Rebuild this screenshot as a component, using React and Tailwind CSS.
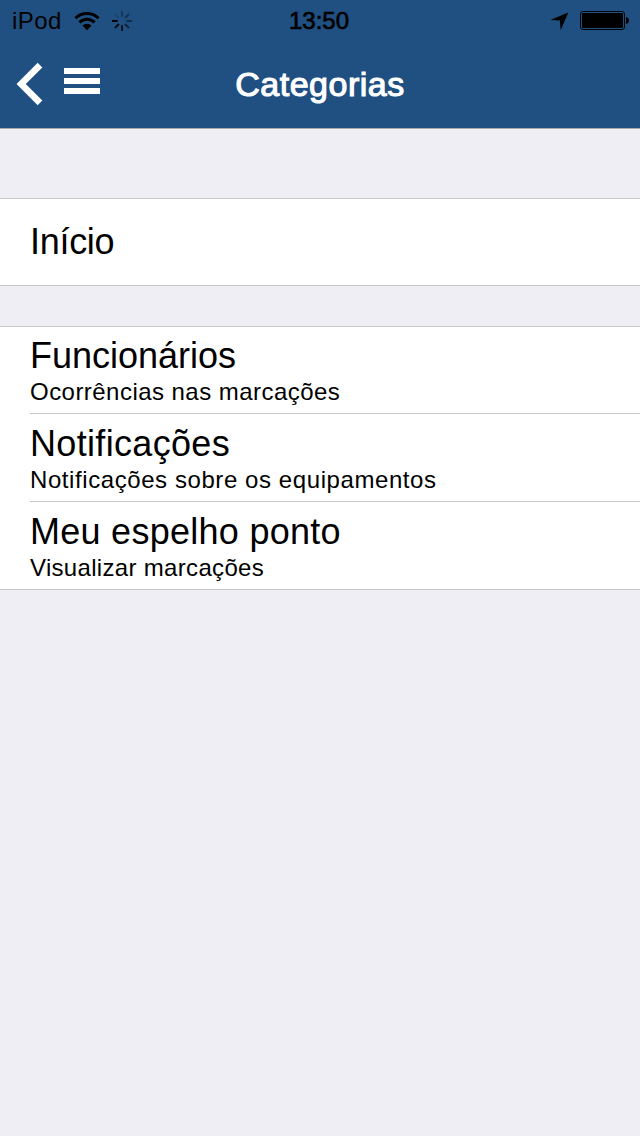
const items = [
  { title: "Funcionários", text: "Ocorrências nas marcações", row: "h-[87px] pt-[9px]", titleGap: "tracking-[0px]", textGap: "tracking-[0.46px]" },
  { title: "Notificações", text: "Notificações sobre os equipamentos", row: "h-[88px] pt-[10px]", titleGap: "tracking-[0.33px]", textGap: "tracking-[0.58px]" },
  { title: "Meu espelho ponto", text: "Visualizar marcações", row: "h-[87px] pt-[10px]", titleGap: "tracking-[0.27px]", textGap: "tracking-[0.32px]" },
];

const spokes = [0.3, 0.38, 0.42, 0.55, 0.75, 0.85, 1, 0.13];

function StatusBar() {
  return (
    <div className="grid h-10 grid-cols-3 items-center pt-px text-[24px] leading-10 text-black">
      <div className="flex items-center pl-3">
        <span className="w-[62px] tracking-[0.4px]">iPod</span>
        <svg className="h-[20px] w-[26px]" viewBox="0 0 26 20" fill="none" stroke="#000" strokeWidth="3">
          <path d="M1.4 7.2a16.4 16.4 0 0 1 23.2 0" />
          <path d="M5.4 11.4a10.8 10.8 0 0 1 15.2 0" />
          <path d="M8.4 14.6a6.5 6.5 0 0 1 9.2 0L13 19.2Z" fill="#000" stroke="none" />
        </svg>
        <svg className="ml-[12px] h-5 w-5" viewBox="-10 -10 20 20" stroke="#000" strokeWidth="2">
          {spokes.map((o, i) => (
            <path key={i} d="M0 -4.3V-10" opacity={o} transform={`rotate(${i * 45})`} />
          ))}
        </svg>
      </div>
      <span className="pr-[2px] text-center [-webkit-text-stroke:0.7px_#000]">13:50</span>
      <div className="flex items-center justify-end pr-[11px]">
        <svg className="mr-[11px] h-[19px] w-[19px]" viewBox="0 0 19 19">
          <path d="M18.3 0.4L10.6 18.2L10 8.6L0.4 8Z" />
        </svg>
        <svg className="h-5 w-[49px]" viewBox="0 0 49 20">
          <rect x="0.5" y="0.5" width="44" height="18" rx="2.5" fill="none" stroke="#000" />
          <rect x="2" y="2" width="41" height="15" rx="1.2" />
          <path d="M46 6.2h0.6q2.4 0.6 2.4 3.3t-2.4 3.3H46Z" />
        </svg>
      </div>
    </div>
  );
}

export default function App() {
  return (
    <div className="flex h-[1136px] w-[640px] flex-col overflow-hidden bg-[#efeef4] font-['Liberation_Sans',Arial,sans-serif] text-black">
      <header className="h-[129px] border-b border-[#a9a9a9] bg-[#205081]">
        <StatusBar />
        <div className="grid h-[88px] grid-cols-[140px_1fr_140px] items-center">
          <div className="flex items-center pb-1 pl-4">
            <svg className="mt-1 h-[44px] w-[28px]" viewBox="0 0 28 44" fill="none" stroke="#fff" strokeWidth="6.6">
              <path d="M24 3.2L5.2 22L24 40.8" />
            </svg>
            <div className="mb-0.5 ml-5 flex flex-col gap-1">
              <div className="h-[6px] w-9 bg-white" />
              <div className="h-[6px] w-9 bg-white" />
              <div className="h-[6px] w-9 bg-white" />
            </div>
          </div>
          <h1 className="text-center text-[34px] leading-10 tracking-[0.5px] text-white [-webkit-text-stroke:1.1px_#fff]">Categorias</h1>
        </div>
      </header>
      <main>
        <section className="mt-[69px] flex h-[88px] items-center border-y border-[#c8c7cc] bg-white pl-[30px]">
          <h2 className="text-[36px] leading-10 tracking-[-0.3px]">Início</h2>
        </section>
        <section className="mt-10 border-y border-[#c8c7cc] bg-white pl-[30px]">
          {items.map((item) => (
            <div key={item.title} className={`border-b border-[#c8c7cc] last:border-b-0 ${item.row}`}>
              <h2 className={`text-[36px] leading-10 ${item.titleGap}`}>{item.title}</h2>
              <p className={`text-[24px] leading-8 ${item.textGap}`}>{item.text}</p>
            </div>
          ))}
        </section>
      </main>
    </div>
  );
}
